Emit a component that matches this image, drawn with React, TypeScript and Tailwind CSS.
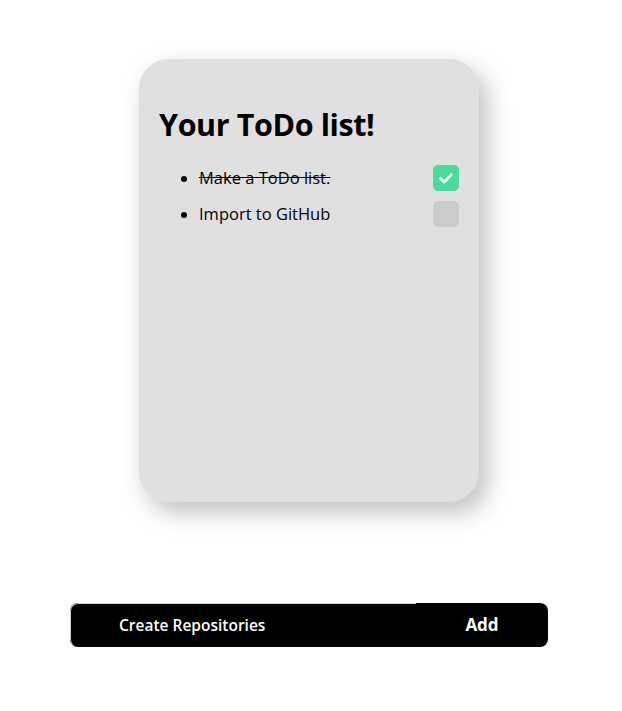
import React, { useState } from "react";

const App = () => {
  const [items, setItems] = useState([
    { text: "Make a ToDo list.", done: true },
    { text: "Import to GitHub", done: false },
  ]);

  const toggle = (i: number) =>
    setItems(items.map((it, j) => (j === i ? { ...it, done: !it.done } : it)));

  return (
    <div
      className="min-h-[711px] bg-white flex flex-col items-center pt-[59px] pr-[4px]"
      style={{ fontFamily: '"Open Sans", "Noto Sans", sans-serif' }}
    >
      <div className="w-[340px] h-[443px] bg-[#e0e0e0] rounded-[30px] shadow-[8px_10px_24px_rgba(0,0,0,0.25)] px-5 pt-[45px]">
        <h1 className="text-[30.5px] font-bold text-black leading-[40px] tracking-[-0.4px]">Your ToDo list!</h1>
        <ul className="mt-[21px] pl-[40px] pr-0 list-disc">
          {items.map((it, i) => (
            <li key={i} className="h-[36px] pl-0">
              <div className="flex items-center justify-between h-[26px]">
                <span className={`text-[16.5px] font-medium text-black ${it.done ? "line-through" : ""}`}>
                  {it.text}
                </span>
                <button
                  onClick={() => toggle(i)}
                  className={`w-[26px] h-[26px] rounded-[5px] flex items-center justify-center ${
                    it.done ? "bg-[#48db9a]" : "bg-[#cbcbcb]"
                  }`}
                >
                  {it.done && (
                    <svg width="14" height="11" viewBox="0 0 14 11" fill="none">
                      <path d="M1.5 5.5 L5.2 9 L12.5 1.8" stroke="white" strokeWidth="2.6" strokeLinecap="round" strokeLinejoin="round" />
                    </svg>
                  )}
                </button>
              </div>
            </li>
          ))}
        </ul>
      </div>

      <div className="mt-[101px] w-[478px] h-[44px] flex bg-black rounded-lg overflow-hidden">
        <input
          className="w-[346px] bg-black text-white font-semibold text-[15.5px] pl-[48px] outline-none border-t border-l border-[#d0d0d0] rounded-l-lg placeholder:text-white"
          placeholder="Create Repositories"
        />
        <button className="flex-1 text-white font-bold text-[17px]">Add</button>
      </div>
    </div>
  );
};

export default App;
